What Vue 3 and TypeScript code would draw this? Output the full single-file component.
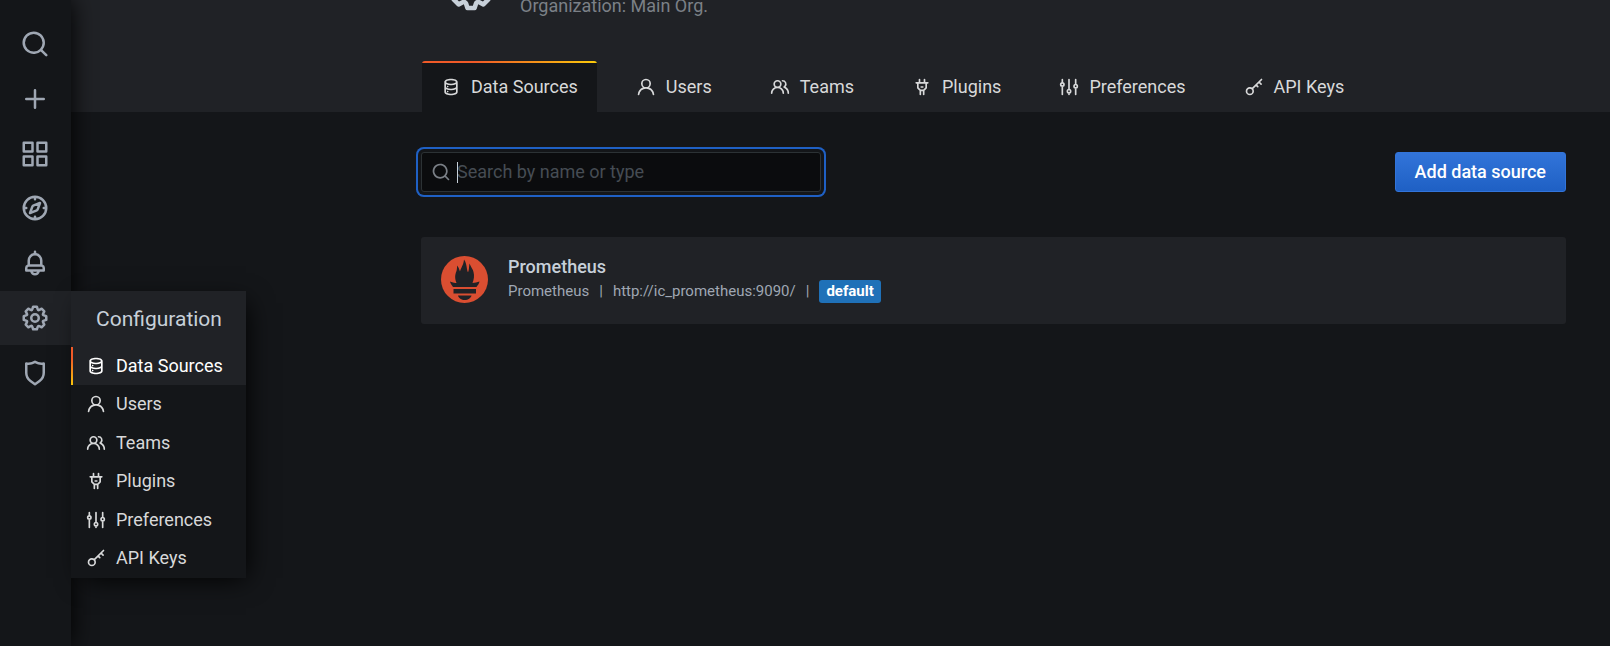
<script setup lang="ts">
import { ref, onMounted } from 'vue'

type Icon = { d?: string; stroke?: string }

const icons: Record<string, Icon> = {
  search: { d: 'M21.71,20.29,18,16.61A9,9,0,1,0,16.61,18l3.68,3.68a1,1,0,0,0,1.42,0A1,1,0,0,0,21.71,20.29ZM11,18a7,7,0,1,1,7-7A7,7,0,0,1,11,18Z' },
  plus: { d: 'M19,11H13V5a1,1,0,0,0-2,0v6H5a1,1,0,0,0,0,2h6v6a1,1,0,0,0,2,0V13h6a1,1,0,0,0,0-2Z' },
  apps: { d: 'M10,13H3a1,1,0,0,0-1,1v7a1,1,0,0,0,1,1h7a1,1,0,0,0,1-1V14A1,1,0,0,0,10,13ZM9,20H4V15H9ZM21,2H14a1,1,0,0,0-1,1v7a1,1,0,0,0,1,1h7a1,1,0,0,0,1-1V3A1,1,0,0,0,21,2ZM20,9H15V4h5Zm1,4H14a1,1,0,0,0-1,1v7a1,1,0,0,0,1,1h7a1,1,0,0,0,1-1V14A1,1,0,0,0,21,13Zm-1,7H15V15h5ZM10,2H3A1,1,0,0,0,2,3v7a1,1,0,0,0,1,1h7a1,1,0,0,0,1-1V3A1,1,0,0,0,10,2ZM9,9H4V4H9Z' },
  compass: { stroke: 'M12 3a9 9 0 1 0 0 18a9 9 0 1 0 0-18ZM12 3v2M12 19v2M3 12h2M19 12h2M16 8l-1.8 4.9a2 2 0 0 1-1.2 1.2L8 16l1.8-4.9a2 2 0 0 1 1.2-1.2Z' },
  bell: { d: 'M18,13.18V10a6,6,0,0,0-5-5.91V3a1,1,0,0,0-2,0V4.09A6,6,0,0,0,6,10v3.18A3,3,0,0,0,4,16v2a1,1,0,0,0,1,1H8.14a4,4,0,0,0,7.72,0H19a1,1,0,0,0,1-1V16A3,3,0,0,0,18,13.18ZM8,10a4,4,0,0,1,8,0v3H8Zm4,10a2,2,0,0,1-1.72-1h3.44A2,2,0,0,1,12,20Zm6-3H6V16a1,1,0,0,1,1-1H17a1,1,0,0,1,1,1Z' },
  cog: { d: 'M21.32,9.55l-1.89-.63.89-1.78A1,1,0,0,0,20.13,6L18,3.87a1,1,0,0,0-1.15-.19l-1.78.89-.63-1.89A1,1,0,0,0,13.5,2h-3a1,1,0,0,0-.95.68L8.92,4.57,7.14,3.68A1,1,0,0,0,6,3.87L3.87,6a1,1,0,0,0-.19,1.15l.89,1.78-1.89.63A1,1,0,0,0,2,10.5v3a1,1,0,0,0,.68.95l1.89.63-.89,1.78A1,1,0,0,0,3.87,18L6,20.13a1,1,0,0,0,1.15.19l1.78-.89.63,1.89a1,1,0,0,0,.95.68h3a1,1,0,0,0,.95-.68l.63-1.89,1.78.89A1,1,0,0,0,18,20.13L20.13,18a1,1,0,0,0,.19-1.15l-.89-1.78,1.89-.63A1,1,0,0,0,22,13.5v-3A1,1,0,0,0,21.32,9.55ZM20,12.78l-1.2.4A2,2,0,0,0,17.64,16l.57,1.14-1.1,1.1L16,17.64a2,2,0,0,0-2.79,1.16l-.4,1.2H11.22l-.4-1.2A2,2,0,0,0,8,17.64l-1.14.57-1.1-1.1L6.36,16A2,2,0,0,0,5.2,13.18L4,12.78V11.22l1.2-.4A2,2,0,0,0,6.36,8L5.79,6.89l1.1-1.1L8,6.36A2,2,0,0,0,10.82,5.2l.4-1.2h1.56l.4,1.2A2,2,0,0,0,16,6.36l1.14-.57,1.1,1.1L17.64,8a2,2,0,0,0,1.16,2.79l1.2.4ZM12,8a4,4,0,1,0,4,4A4,4,0,0,0,12,8Zm0,6a2,2,0,1,1,2-2A2,2,0,0,1,12,14Z' },
  shield: { d: 'M19.63,3.65a1,1,0,0,0-.84-.2,8,8,0,0,1-6.22-1.27,1,1,0,0,0-1.14,0A8,8,0,0,1,5.21,3.45a1,1,0,0,0-.84.2A1,1,0,0,0,4,4.43v7.45a9,9,0,0,0,3.77,7.33l3.65,2.6a1,1,0,0,0,1.16,0l3.65-2.6A9,9,0,0,0,20,11.88V4.43A1,1,0,0,0,19.63,3.65ZM18,11.88a7,7,0,0,1-2.93,5.7L12,19.77,8.93,17.58A7,7,0,0,1,6,11.88V5.58a10,10,0,0,0,6-1.39,10,10,0,0,0,6,1.39Z' },
  database: { d: 'M8,16.5a1,1,0,1,0,1,1A1,1,0,0,0,8,16.5ZM12,2C8,2,4,3.37,4,6V18c0,2.63,4,4,8,4s8-1.37,8-4V6C20,3.37,16,2,12,2Zm6,16c0,.71-2.28,2-6,2s-6-1.29-6-2V14.73A13.16,13.16,0,0,0,12,16a13.16,13.16,0,0,0,6-1.27Zm0-6c0,.71-2.28,2-6,2s-6-1.29-6-2V8.73A13.16,13.16,0,0,0,12,10a13.16,13.16,0,0,0,6-1.27ZM12,8C8.28,8,6,6.71,6,6s2.28-2,6-2,6,1.29,6,2S15.72,8,12,8ZM8,10.5a1,1,0,1,0,1,1A1,1,0,0,0,8,10.5Z' },
  user: { d: 'M15.71,12.71a6,6,0,1,0-7.42,0,10,10,0,0,0-6.22,8.18,1,1,0,0,0,2,.22,8,8,0,0,1,15.9,0,1,1,0,0,0,1,.89h.11a1,1,0,0,0,.88-1.1A10,10,0,0,0,15.71,12.71ZM12,12a4,4,0,1,1,4-4A4,4,0,0,1,12,12Z' },
  users: { d: 'M12.3,12.22A4.92,4.92,0,0,0,14,8.5a5,5,0,0,0-10,0,4.92,4.92,0,0,0,1.7,3.72A8,8,0,0,0,1,19.5a1,1,0,0,0,2,0,6,6,0,0,1,12,0,1,1,0,0,0,2,0A8,8,0,0,0,12.3,12.22ZM9,11.5a3,3,0,1,1,3-3A3,3,0,0,1,9,11.5Zm9.74.32A5,5,0,0,0,15,3.5a1,1,0,0,0,0,2,3,3,0,0,1,3,3,3,3,0,0,1-1.5,2.59,1,1,0,0,0-.5.84,1,1,0,0,0,.45.86l.39.26.13.07a7,7,0,0,1,4,6.38,1,1,0,0,0,2,0A9,9,0,0,0,18.74,11.82Z' },
  plug: { stroke: 'M9 3v4M15 3v4M5 7h14M7 7v6l3 3h4l3-3V7M10 16v5M14 16v5M11 12h2' },
  sliders: { stroke: 'M4 3v4M4 11v10M4 7a2 2 0 1 0 0 4a2 2 0 1 0 0-4ZM12 3v12M12 19v2M12 15a2 2 0 1 0 0 4a2 2 0 1 0 0-4ZM20 3v6M20 13v8M20 9a2 2 0 1 0 0 4a2 2 0 1 0 0-4Z' },
  key: { stroke: 'M7 13a4 4 0 1 0 0 8a4 4 0 1 0 0-8ZM10 14L21 3M18 6l2.5 2.5M14.5 9.5l2 2' },
}

const sideItems = [
  { icon: 'search', label: 'Search' },
  { icon: 'plus', label: 'Create' },
  { icon: 'apps', label: 'Dashboards' },
  { icon: 'compass', label: 'Explore' },
  { icon: 'bell', label: 'Alerting' },
  { icon: 'cog', label: 'Configuration' },
  { icon: 'shield', label: 'Server Admin' },
]

const pages = [
  { icon: 'database', label: 'Data Sources' },
  { icon: 'user', label: 'Users' },
  { icon: 'users', label: 'Teams' },
  { icon: 'plug', label: 'Plugins' },
  { icon: 'sliders', label: 'Preferences' },
  { icon: 'key', label: 'API Keys' },
]

const activePage = 'Data Sources'
const query = ref('')
const searchBox = ref<HTMLInputElement | null>(null)
onMounted(() => searchBox.value?.focus())
</script>

<template>
  <div class="app">
    <nav class="sidebar" aria-label="Main">
      <ul class="side-list">
        <li v-for="item in sideItems" :key="item.icon" class="side-item" :class="{ open: item.icon === 'cog' }">
          <a href="#" class="side-link" :aria-label="item.label">
            <svg class="icon-large" viewBox="0 0 24 24" aria-hidden="true">
              <path v-if="icons[item.icon].d" class="solid" :d="icons[item.icon].d" />
              <path v-else class="line" :d="icons[item.icon].stroke" />
            </svg>
          </a>
          <div v-if="item.icon === 'cog'" class="flyout">
            <a href="#" class="flyout-title">{{ item.label }}</a>
            <ul class="flyout-list">
              <li v-for="page in pages" :key="page.label" class="flyout-item">
                <a href="#" class="flyout-link" :class="{ active: page.label === activePage }">
                  <svg class="icon" viewBox="0 0 24 24" aria-hidden="true">
                    <path v-if="icons[page.icon].d" class="solid" :d="icons[page.icon].d" />
                    <path v-else class="line" :d="icons[page.icon].stroke" />
                  </svg>
                  {{ page.label }}
                </a>
              </li>
            </ul>
          </div>
        </li>
      </ul>
    </nav>

    <div class="page">
      <header class="page-header">
        <div class="heading">
          <svg class="heading-icon" viewBox="0 0 24 24" aria-hidden="true"><path class="solid" :d="icons.cog.d" /></svg>
          <p class="subtitle">Organization: Main Org.</p>
        </div>
        <nav class="tabs" aria-label="Configuration pages">
          <a v-for="page in pages" :key="page.label" href="#" class="tab" :class="{ active: page.label === activePage }">
            <svg class="icon" viewBox="0 0 24 24" aria-hidden="true">
              <path v-if="icons[page.icon].d" class="solid" :d="icons[page.icon].d" />
              <path v-else class="line" :d="icons[page.icon].stroke" />
            </svg>
            {{ page.label }}
          </a>
        </nav>
      </header>

      <main class="content">
        <div class="toolbar">
          <label class="search">
            <svg class="icon" viewBox="0 0 24 24" aria-hidden="true"><path class="solid" :d="icons.search.d" /></svg>
            <span class="field">
              <span v-if="!query" class="caret" aria-hidden="true"></span>
              <input ref="searchBox" v-model="query" :class="{ empty: !query }" type="text" aria-label="Search by name or type" placeholder="Search by name or type" />
            </span>
          </label>
          <button type="button" class="primary">Add data source</button>
        </div>

        <ul class="sources">
          <li class="source">
            <svg class="logo" viewBox="0 0 47 47" aria-hidden="true">
              <circle cx="23.5" cy="23.5" r="23.5" fill="#da4e31" />
              <path fill="#202226" d="M9 25.5C12 26.5 14.500 27 15.500 27C13.500 22 14 18.500 15.500 15C16 13 16.200 11 16 9.500C18 11.500 18.200 13.500 19 15.500C20 11.500 22.500 9 23 3.500C25 6 25.500 10 26 13C26.500 16 27 17 27.500 15C28.200 12.500 28 10 28.500 7.500C30 11 32 13.500 32.500 16C33.500 20 33 23 31.500 27C34 26.800 36 26.200 38.500 25.500C38 28 36.500 29.500 35.500 31H12C10.500 29 9.500 27.500 9 25.500ZM12.500 33H35V37.500H12.500ZM17 39.500H30.500C30 42 27 44 23.800 44C20.500 44 17.500 42 17 39.500Z" />
            </svg>
            <div class="source-body">
              <a href="#" class="source-name">Prometheus</a>
              <div class="source-meta">
                <span>Prometheus</span><span>|</span><span>http://ic_prometheus:9090/</span><span>|</span><span class="badge">default</span>
              </div>
            </div>
          </li>
        </ul>
      </main>
    </div>
  </div>
</template>

<style>
body {
  margin: 0;
  background: #141619;
}
</style>

<style scoped>
.app {
  display: flex;
  min-height: 100vh;
  overflow: hidden;
  font-family: Roboto, sans-serif;
  font-size: 18px;
  line-height: 24px;
  color: #d8d9da;
  background: #141619;
}
a {
  color: inherit;
  text-decoration: none;
}
ul {
  list-style: none;
  margin: 0;
  padding: 0;
}
.solid {
  fill: currentColor;
}
.line {
  fill: none;
  stroke: currentColor;
  stroke-width: 2;
  stroke-linecap: round;
  stroke-linejoin: round;
}
.icon {
  width: 20px;
  height: 20px;
  flex: none;
}
.icon-large {
  width: 30px;
  height: 30px;
}
.sidebar {
  position: relative;
  z-index: 1;
  flex: none;
  width: 71px;
  box-sizing: border-box;
  padding-top: 17px;
  background: #141619;
  box-shadow: 0 0 25px #000;
}
.side-list {
  display: grid;
  grid-template-rows: repeat(7, 1fr);
  height: 383px;
}
.side-item {
  position: relative;
}
.side-item.open {
  background: #202226;
}
.side-link {
  display: flex;
  align-items: center;
  justify-content: center;
  box-sizing: border-box;
  height: 100%;
  padding-right: 2px;
  color: #9fa7b3;
}
.flyout {
  position: absolute;
  top: 0;
  left: 100%;
  width: 175px;
  background: #141619;
  box-shadow: 6px 6px 25px -6px #000;
}
.flyout-title {
  display: block;
  padding: 16px 25px;
  font-size: 21px;
  color: #c7d0d9;
  background: #202226;
}
.flyout-list {
  display: grid;
  grid-template-rows: repeat(6, 1fr);
  height: 231px;
}
.flyout-link {
  display: flex;
  align-items: center;
  gap: 10px;
  height: 100%;
  box-sizing: border-box;
  padding-left: 15px;
}
.flyout-link.active {
  padding-left: 13px;
  border-left: 2px solid;
  border-image: linear-gradient(#f05a28 30%, #fbca0a) 1;
  color: #fff;
  background: #202226;
}
.page {
  flex: 1;
  min-width: 0;
}
.page-header {
  height: 112px;
  display: flex;
  flex-direction: column;
  justify-content: flex-end;
  box-sizing: border-box;
  padding: 0 44px 0 351px;
  background: #202226;
}
.heading {
  display: flex;
  align-items: flex-end;
  gap: 21px;
  padding-left: 21px;
  margin-bottom: 43px;
}
.heading-icon {
  width: 56px;
  height: 56px;
  margin-bottom: 3px;
  color: #c7d0d9;
}
.subtitle {
  margin: 0;
  color: #7b8087;
}
.tabs {
  display: flex;
  gap: 20px;
}
.tab {
  display: flex;
  align-items: center;
  gap: 10px;
  box-sizing: border-box;
  height: 51px;
  padding: 0 19px;
  white-space: nowrap;
}
.tab.active {
  border-radius: 3px 3px 0 0;
  background: linear-gradient(90deg, #f05a28 30%, #fbca0a) top / 100% 2px no-repeat #141619;
}
.content {
  padding: 40px 44px 0 350px;
}
.toolbar {
  display: flex;
  justify-content: space-between;
}
.search {
  display: flex;
  align-items: center;
  gap: 6px;
  box-sizing: border-box;
  width: 400px;
  height: 40px;
  padding: 0 9px;
  border: 1px solid #2c3235;
  border-radius: 3px;
  color: #7b8087;
  background: #0b0c0e;
}
.search:focus-within {
  box-shadow: 0 0 0 3px #141619, 0 0 0 5px #1f60c4;
}
.field {
  position: relative;
  display: flex;
  flex: 1;
  align-items: center;
}
.caret {
  position: absolute;
  left: 0;
  width: 1px;
  height: 21px;
  background: #c7d0d9;
}
.search input {
  flex: 1;
  min-width: 0;
  padding: 0;
  border: 0;
  outline: 0;
  font: inherit;
  color: #c7d0d9;
  background: none;
}
.search input.empty {
  caret-color: transparent;
}
.search input::placeholder {
  color: #464c54;
  opacity: 1;
}
.primary {
  height: 40px;
  padding: 0 19px;
  border: 1px solid #3274d9;
  border-radius: 3px;
  font: 500 18px/24px Roboto, sans-serif;
  color: #fff;
  background: linear-gradient(#3274d9, #1f60c4);
}
.sources {
  margin-top: 45px;
}
.source {
  display: flex;
  align-items: center;
  gap: 20px;
  padding: 18px 20px 20px;
  border-radius: 3px;
  background: #202226;
}
.logo {
  flex: none;
  width: 47px;
  height: 47px;
}
.source-name {
  display: block;
  font-weight: 500;
  color: #c7d0d9;
}
.source-meta {
  display: flex;
  align-items: center;
  gap: 10px;
  height: 25px;
  font-size: 15px;
  line-height: 23px;
  color: #9fa7b3;
}
.badge {
  padding: 0 7px;
  border-radius: 3px;
  font-weight: 700;
  color: #fff;
  background: #1f71b8;
}
</style>
